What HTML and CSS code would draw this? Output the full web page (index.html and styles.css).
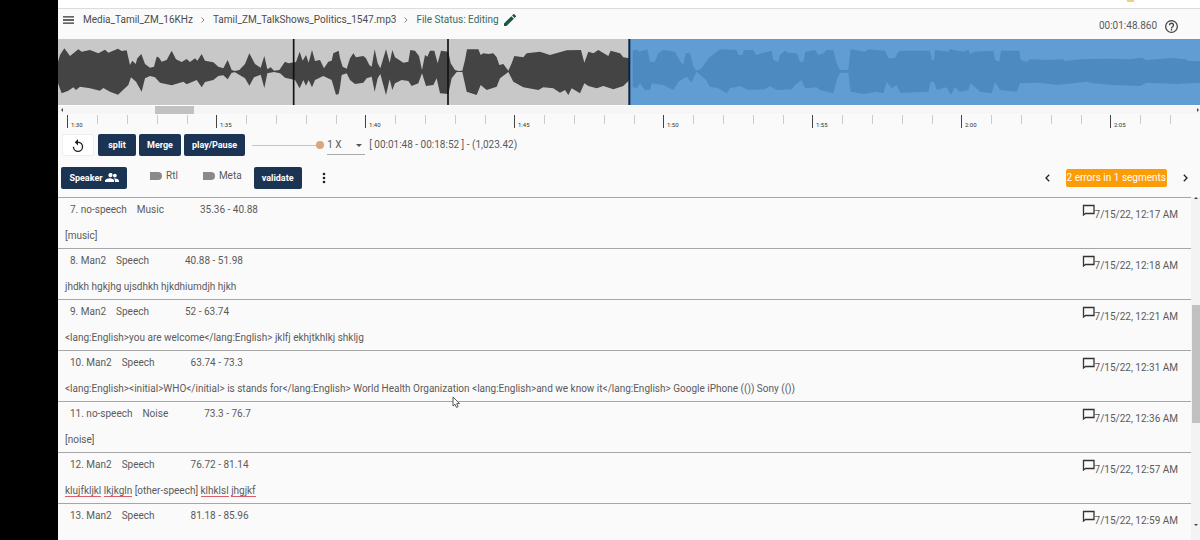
FILE: index.html
```html
<!DOCTYPE html>
<html lang="en">
<head>
<meta charset="utf-8">
<title>Tamil_ZM_TalkShows_Politics_1547.mp3</title>
<link rel="stylesheet" href="styles.css">
</head>
<body>
<aside class="rail"></aside>
<main class="app">
  <div class="topstrip"><span class="topmark"></span></div>
  <header class="header">
    <nav class="crumbs">
      <button class="icon-btn" aria-label="Menu"><svg width="11" height="8" viewBox="0 0 11 8"><path d="M0 .8h11M0 4h11M0 7.2h11" stroke="#333" stroke-width="1.3"/></svg></button>
      <a class="crumb" href="#">Media_Tamil_ZM_16KHz</a>
      <svg class="sep" width="4" height="6" viewBox="0 0 4 6"><path d="M.5.5 3 3 .5 5.5" fill="none" stroke="#888"/></svg>
      <a class="crumb" href="#">Tamil_ZM_TalkShows_Politics_1547.mp3</a>
      <svg class="sep" width="4" height="6" viewBox="0 0 4 6"><path d="M.5.5 3 3 .5 5.5" fill="none" stroke="#888"/></svg>
      <span class="status">File Status: Editing</span>
      <button class="icon-btn edit" aria-label="Edit status"><svg width="12" height="12" viewBox="3 3 18 18"><path fill="#17583f" d="M3 17.25V21h3.75L17.81 9.94l-3.75-3.75L3 17.25zM20.71 7.04a1 1 0 0 0 0-1.41l-2.34-2.34a1 1 0 0 0-1.41 0l-1.83 1.83 3.75 3.75 1.83-1.83z"/></svg></button>
    </nav>
    <div class="clock">
      <span>00:01:48.860</span>
      <button class="icon-btn" aria-label="Help"><svg width="13" height="13" viewBox="2 2 20 20"><path fill="#444" d="M11 18h2v-2h-2v2zm1-16a10 10 0 1 0 0 20 10 10 0 0 0 0-20zm0 18a8 8 0 1 1 0-16 8 8 0 0 1 0 16zm0-14a4 4 0 0 0-4 4h2a2 2 0 1 1 4 0c0 2-3 1.750-3 5h2c0-2.250 3-2.500 3-5a4 4 0 0 0-4-4z"/></svg></button>
    </div>
  </header>

  <svg class="wave" viewBox="0 0 3426 198" preserveAspectRatio="none" role="img" aria-label="Waveform">
    <rect width="3426" height="198" fill="#c8c8c8"/>
    <rect x="1716" width="1710" height="198" fill="#619dd3"/>
    <g fill="#444">
      <path transform="translate(-24 -117)" d="M24 185 30 165 43 145 60 168 85 148 95 155 120 150 145 160 165 149 175 158 204 146 215 153 230 151 240 195 247 182 257 192 262 175 274 162 285 192 300 203 312 200 320 170 326 172 335 185 350 180 365 152 378 178 395 186 410 177 420 186 435 175 442 182 455 162 465 182 490 187 505 200 520 205 533 180 545 210 555 213 568 210 585 192 598 160 615 192 632 203 643 168 652 208 662 202 672 212 688 210 705 185 715 190 738 186 749 155 758 182 768 165 776 188 786 150 795 183 810 180 822 205 835 185 845 182 850 160 866 152 870 175 870 262 866 282 858 284 845 240 820 228 795 240 786 262 776 240 768 257 760 240 749 265 735 240 705 233 690 220 672 216 652 220 643 264 632 224 612 232 598 257 585 235 555 217 545 218 533 238 520 226 505 228 490 240 465 246 455 262 440 240 410 253 400 245 365 256 330 248 315 232 300 228 285 235 275 275 258 245 243 232 235 255 204 284 180 275 160 264 150 272 120 265 90 260 78 270 70 262 55 272 35 280 24 250Z"/>
      <path transform="translate(846 -117)" d="M0 175 8 200 20 206 30 175 40 160 48 172 70 168 78 175 88 195 95 200 104 148 113 190 121 205 138 148 149 188 157 150 165 172 190 188 205 185 211 150 225 152 237 168 246 210 255 165 262 170 270 152 283 152 293 190 303 152 325 155 332 190 345 210 355 213 367 212 375 180 381 148 415 148 422 165 430 160 445 162 460 160 470 172 478 195 490 192 505 212 515 190 523 168 550 172 560 160 600 155 630 165 680 151 723 150 733 188 745 155 760 160 775 150 805 168 812 152 840 160 850 172 868 175 868 240 850 258 820 268 790 258 770 265 745 258 733 250 720 280 695 265 685 285 675 270 660 278 640 265 610 262 595 270 550 262 520 245 505 216 480 235 470 260 440 270 422 255 410 285 380 275 367 216 350 216 335 235 325 282 300 280 290 235 280 255 258 258 246 220 235 250 215 258 205 243 185 240 165 250 157 270 149 238 138 285 121 222 113 235 104 275 95 230 80 235 70 248 45 252 30 240 20 220 5 225 0 262Z"/>
    </g>
    <g fill="#4c8abf">
      <path transform="translate(1686 -117)" d="M38 152 50 148 58 155 82 148 90 185 105 185 115 160 130 150 165 155 178 180 190 195 197 160 210 158 220 200 230 212 245 205 258 185 270 170 285 160 300 148 350 150 355 165 368 165 372 150 400 150 408 165 455 152 460 180 475 185 480 165 495 152 505 158 530 160 540 185 550 185 556 155 585 150 595 165 610 160 620 150 640 150 650 190 660 210 685 210 692 148 735 155 745 148 795 152 805 175 825 175 832 160 840 152 840 275 830 255 815 265 800 245 790 280 770 275 730 282 692 275 685 218 660 218 650 240 640 280 600 270 590 262 555 265 545 240 525 255 515 268 470 270 450 258 435 268 385 270 360 258 330 265 320 280 295 265 270 260 258 240 230 215 222 230 215 248 200 230 175 245 160 270 130 255 95 250 90 270 75 270 60 250 50 265 38 260Z"/>
      <path transform="translate(2526 -117)" d="M0 152H90L95 180H102L105 150 145 155 150 148 190 155 205 150 210 162 225 155 280 152 285 180 298 185 303 152H358L362 180 380 185 390 178 440 180 490 178 495 183 540 178 620 176 690 178 725 173 740 180 815 174 855 178 865 183H900V248L830 252 740 248 720 258 640 255 580 250 560 245 470 255 420 248 360 250 350 275 300 270 285 245 275 280 240 275 212 250 205 270 180 275 165 262 152 285 140 262 110 270 102 245H92L85 275 0 278Z"/>
    </g>
    <path d="M707 0V198M1170 0V198" stroke="#111" stroke-width="5"/>
    <path d="M1714 0V198" stroke="#0d2440" stroke-width="6"/>
  </svg>

  <div class="hscroll"><span class="arrow left"></span><span class="hthumb"></span><span class="arrow right"></span></div>
  <ol class="ruler">
    <li>1:30</li><li>1:35</li><li>1:40</li><li>1:45</li><li>1:50</li><li>1:55</li><li>2:00</li><li>2:05</li>
  </ol>

  <section class="bar playback">
    <button class="btn light" aria-label="Replay"><svg width="12" height="13" viewBox="4 1 16 20"><path fill="#222" d="M12 5V1L7 6l5 5V7a6 6 0 1 1-6 6H4a8 8 0 1 0 8-8z"/></svg></button>
    <button class="btn">split</button>
    <button class="btn">Merge</button>
    <button class="btn">play/Pause</button>
    <input class="slider" type="range" min="0" max="100" value="100" aria-label="Volume">
    <span class="speed"><select aria-label="Playback speed"><option>1 X</option></select></span>
    <span class="range">[ 00:01:48 - 00:18:52 ] - (1,023.42)</span>
  </section>

  <section class="bar tools">
    <button class="btn speaker">Speaker <svg width="14" height="9" viewBox="1 5 22 14"><path fill="#fff" d="M16.500 12a3 3 0 1 0 0-6 3 3 0 0 0 0 6zM9 11.500a3.300 3.300 0 1 0 0-6.500 3.300 3.300 0 0 0 0 6.500zm7.500 2c-.6 0-1.200.1-1.800.2 1.300 1 2 2.100 2 3.300v2H23v-2c0-2.400-4.200-3.500-6.500-3.500zM9 13c-2.700 0-8 1.300-8 4v2h14.500v-2c0-2.700-4-4-6.500-4z"/></svg></button>
    <label class="toggle"><input type="checkbox">Rtl</label>
    <label class="toggle"><input type="checkbox">Meta</label>
    <button class="btn validate">validate</button>
    <button class="icon-btn more" aria-label="More"><svg width="4" height="12" viewBox="0 0 4 12" fill="#222"><circle cx="2" cy="2" r="1.300"/><circle cx="2" cy="6" r="1.300"/><circle cx="2" cy="10" r="1.300"/></svg></button>
    <div class="errors">
      <button class="icon-btn" aria-label="Previous error"><svg width="5" height="8" viewBox="0 0 5 8"><path d="M4.200.8 1 4l3.200 3.200" fill="none" stroke="#222" stroke-width="1.300"/></svg></button>
      <span class="badge">2 errors in 1 segments</span>
      <button class="icon-btn" aria-label="Next error"><svg width="5" height="8" viewBox="0 0 5 8"><path d="M.8.8 4 4 .8 7.200" fill="none" stroke="#222" stroke-width="1.300"/></svg></button>
    </div>
  </section>

  <section class="segments">
    <div class="list">
      <article class="seg">
        <div class="meta"><span>7. no-speech</span><span>Music</span><span class="span">35.36 - 40.88</span></div>
        <div class="stamp"><svg class="note" viewBox="0 0 13 13"><path d="M1.500 11V1.500h10.500v8H3.500z" fill="none" stroke="#333" stroke-width="1.300"/></svg>7/15/22, 12:17 AM</div>
        <p class="text">[music]</p>
      </article>
      <article class="seg">
        <div class="meta"><span>8. Man2</span><span>Speech</span><span class="span">40.88 - 51.98</span></div>
        <div class="stamp"><svg class="note" viewBox="0 0 13 13"><path d="M1.500 11V1.500h10.500v8H3.500z" fill="none" stroke="#333" stroke-width="1.300"/></svg>7/15/22, 12:18 AM</div>
        <p class="text">jhdkh hgkjhg ujsdhkh hjkdhiumdjh hjkh</p>
      </article>
      <article class="seg">
        <div class="meta"><span>9. Man2</span><span>Speech</span><span class="span">52 - 63.74</span></div>
        <div class="stamp"><svg class="note" viewBox="0 0 13 13"><path d="M1.500 11V1.500h10.500v8H3.500z" fill="none" stroke="#333" stroke-width="1.300"/></svg>7/15/22, 12:21 AM</div>
        <p class="text">&lt;lang:English&gt;you are welcome&lt;/lang:English&gt; jklfj ekhjtkhlkj shkljg</p>
      </article>
      <article class="seg">
        <div class="meta"><span>10. Man2</span><span>Speech</span><span class="span">63.74 - 73.3</span></div>
        <div class="stamp"><svg class="note" viewBox="0 0 13 13"><path d="M1.500 11V1.500h10.500v8H3.500z" fill="none" stroke="#333" stroke-width="1.300"/></svg>7/15/22, 12:31 AM</div>
        <p class="text">&lt;lang:English&gt;&lt;initial&gt;WHO&lt;/initial&gt; is stands for&lt;/lang:English&gt; World Health Organization &lt;lang:English&gt;and we know it&lt;/lang:English&gt; Google iPhone (()) Sony (())</p>
      </article>
      <article class="seg">
        <div class="meta"><span>11. no-speech</span><span>Noise</span><span class="span">73.3 - 76.7</span></div>
        <div class="stamp"><svg class="note" viewBox="0 0 13 13"><path d="M1.500 11V1.500h10.500v8H3.500z" fill="none" stroke="#333" stroke-width="1.300"/></svg>7/15/22, 12:36 AM</div>
        <p class="text">[noise]</p>
      </article>
      <article class="seg">
        <div class="meta"><span>12. Man2</span><span>Speech</span><span class="span">76.72 - 81.14</span></div>
        <div class="stamp"><svg class="note" viewBox="0 0 13 13"><path d="M1.500 11V1.500h10.500v8H3.500z" fill="none" stroke="#333" stroke-width="1.300"/></svg>7/15/22, 12:57 AM</div>
        <p class="text"><span class="typo">klujfkljkl</span> <span class="typo">lkjkgln</span> [other-speech] <span class="typo">klhklsl</span> <span class="typo">jhgjkf</span></p>
      </article>
      <article class="seg">
        <div class="meta"><span>13. Man2</span><span>Speech</span><span class="span">81.18 - 85.96</span></div>
        <div class="stamp"><svg class="note" viewBox="0 0 13 13"><path d="M1.500 11V1.500h10.500v8H3.500z" fill="none" stroke="#333" stroke-width="1.300"/></svg>7/15/22, 12:59 AM</div>
      </article>
    </div>
    <div class="vscroll"><span class="arrow up"></span><span class="vthumb"></span><span class="arrow down"></span></div>
  </section>
</main>
<svg class="pointer" width="9" height="13" viewBox="0 0 9 13"><path d="M1 1v9l2-1.700 1.500 3.200 1.600-.8L4.700 7.600H7.500z" fill="#fff" stroke="#555"/></svg>
</body>
</html>
```
FILE: styles.css
```css
* { box-sizing: border-box; }

body {
  margin: 0;
  height: 100vh;
  display: flex;
  overflow: hidden;
  background: #fafafa;
  color: #5a5a5a;
  font: 10px/14px Roboto, "Liberation Sans", sans-serif;
}

button { font: inherit; cursor: pointer; }

.rail { flex: 0 0 58px; background: #000; }

.app { flex: 1; min-width: 0; display: flex; flex-direction: column; }

.topstrip {
  flex: none;
  display: flex;
  justify-content: flex-end;
  height: 9px;
  padding-right: 66px;
  background: #fff;
  border-bottom: 1px solid #dcdcdc;
}
.topmark { width: 7px; height: 2px; background: #ecd27c; }

.header {
  flex: none;
  display: flex;
  justify-content: space-between;
  height: 30px;
  padding: 4px 22px 0 5px;
}
.crumbs, .clock { display: flex; align-items: center; }
.crumbs { height: 14px; }
.crumbs .icon-btn:first-child { margin-right: 9px; }
.clock { height: 26px; gap: 8px; }
.crumb { color: #4c4c4c; text-decoration: none; }
.crumbs, .crumb { white-space: nowrap; }
.sep { margin: 0 8px; }
.status { color: #3c6b5a; }
.edit { margin-left: 5px; }

.icon-btn {
  display: flex;
  align-items: center;
  padding: 0;
  border: 0;
  background: none;
}

.wave { flex: none; display: block; width: 100%; height: 66px; }

.hscroll {
  flex: none;
  display: flex;
  align-items: center;
  height: 9px;
  padding: 0 1px 0 3px;
  background: #f6f6f6;
  border-top: 1px solid #fff;
}
.hthumb { width: 39px; height: 8px; margin-left: 92px; background: #c1c1c1; }
.arrow { flex: none; border: 2px solid transparent; }
.arrow.left { border-right-color: #444; border-left-width: 0; }
.arrow.right { margin-left: auto; border-left-color: #444; border-right-width: 0; }
.arrow.up { border-bottom-color: #444; border-top-width: 0; }
.arrow.down { border-top-color: #444; border-bottom-width: 0; }

.ruler {
  flex: none;
  display: flex;
  height: 14px;
  margin: 0;
  padding: 1px 0 0 9px;
  overflow: hidden;
  list-style: none;
}
.ruler li {
  flex: 0 0 149px;
  padding: 5px 0 0 3px;
  border-left: 1px solid #444;
  background: repeating-linear-gradient(90deg, transparent 0 29px, #ccc 29px 30px) 0 0 / 146px 9px no-repeat;
  color: #333;
  font-size: 6px;
  line-height: 9px;
}

.bar { flex: none; display: flex; align-items: center; }
.playback { height: 33px; padding: 1px 10px 0 4px; }
.tools { height: 36px; padding: 0 12px 3px 3px; }

.btn {
  display: flex;
  align-items: center;
  justify-content: center;
  height: 22px;
  margin-right: 3px;
  padding: 0 8px;
  border: 0;
  border-radius: 2px;
  background: #1c3454;
  color: #fff;
  font-size: 9px;
  font-weight: 700;
}
.playback .btn { min-width: 38px; }
.playback .btn.light { min-width: 32px; margin-right: 4px; background: #fff; border: 1px solid #eee; }

.slider {
  appearance: none;
  width: 72px;
  height: 8px;
  margin: 0 3px 0 4px;
  background: linear-gradient(#e0bd9c, #e0bd9c) center / 100% 1px no-repeat;
}
.slider::-webkit-slider-thumb {
  appearance: none;
  width: 8px;
  height: 8px;
  border-radius: 50%;
  background: #dba67c;
}

.speed {
  display: flex;
  position: relative;
  width: 38px;
  height: 19px;
  border-bottom: 1px solid #aaa;
}
.speed::after {
  content: "";
  position: absolute;
  right: 3px;
  top: 8px;
  border: 3px solid transparent;
  border-top-color: #555;
  border-bottom: 0;
}
.speed select {
  appearance: none;
  width: 100%;
  padding: 0;
  border: 0;
  background: none;
  color: inherit;
  font: inherit;
}
.range { margin-left: 4px; white-space: nowrap; }

.speaker { gap: 2px; min-width: 66px; margin-right: 15px; }
.validate { min-width: 48px; margin-right: 20px; }
.toggle { display: flex; align-items: center; height: 14px; margin-right: 17px; padding-bottom: 3px; }
.toggle + .validate { margin-left: -5px; }
.toggle input {
  appearance: none;
  width: 20px;
  height: 8px;
  margin: 0 4px 0 0;
  border-radius: 2px 4px 4px 2px;
  background: linear-gradient(#8a8a8a, #8a8a8a) right / 12px 8px no-repeat;
}

.errors { display: flex; align-items: center; gap: 16px; margin-left: auto; }
.badge {
  padding: 2px 1px;
  border-radius: 2px;
  background: #fc9d07;
  color: #fff;
  white-space: nowrap;
}

.segments { flex: 1; min-height: 0; display: flex; }
.list { flex: 1; min-width: 0; overflow: hidden; }
.seg {
  display: grid;
  grid-template-columns: 1fr auto;
  grid-template-rows: 26px 24px;
  padding: 0 13px 0 7px;
  border-top: 1px solid #a6a6a6;
}
.meta { display: flex; gap: 10px; padding: 5px 0 0 5px; }
.meta .span { margin-left: 26px; }
.stamp { display: flex; align-items: flex-start; padding-top: 10px; white-space: nowrap; }
.note { width: 13px; height: 13px; margin-top: -4px; }
.text { grid-column: 1 / -1; margin: 0; padding-top: 5px; white-space: nowrap; }
.typo { border-bottom: 1px solid #d9606a; }

.vscroll {
  flex: 0 0 9px;
  display: flex;
  flex-direction: column;
  align-items: center;
  padding-bottom: 14px;
  background: #f3f3f3;
}
.vthumb { width: 8px; height: 118px; margin-top: 106px; background: #c1c1c1; }
.vscroll .down { margin-top: auto; }

.pointer { position: absolute; left: 452px; top: 396px; }
```
